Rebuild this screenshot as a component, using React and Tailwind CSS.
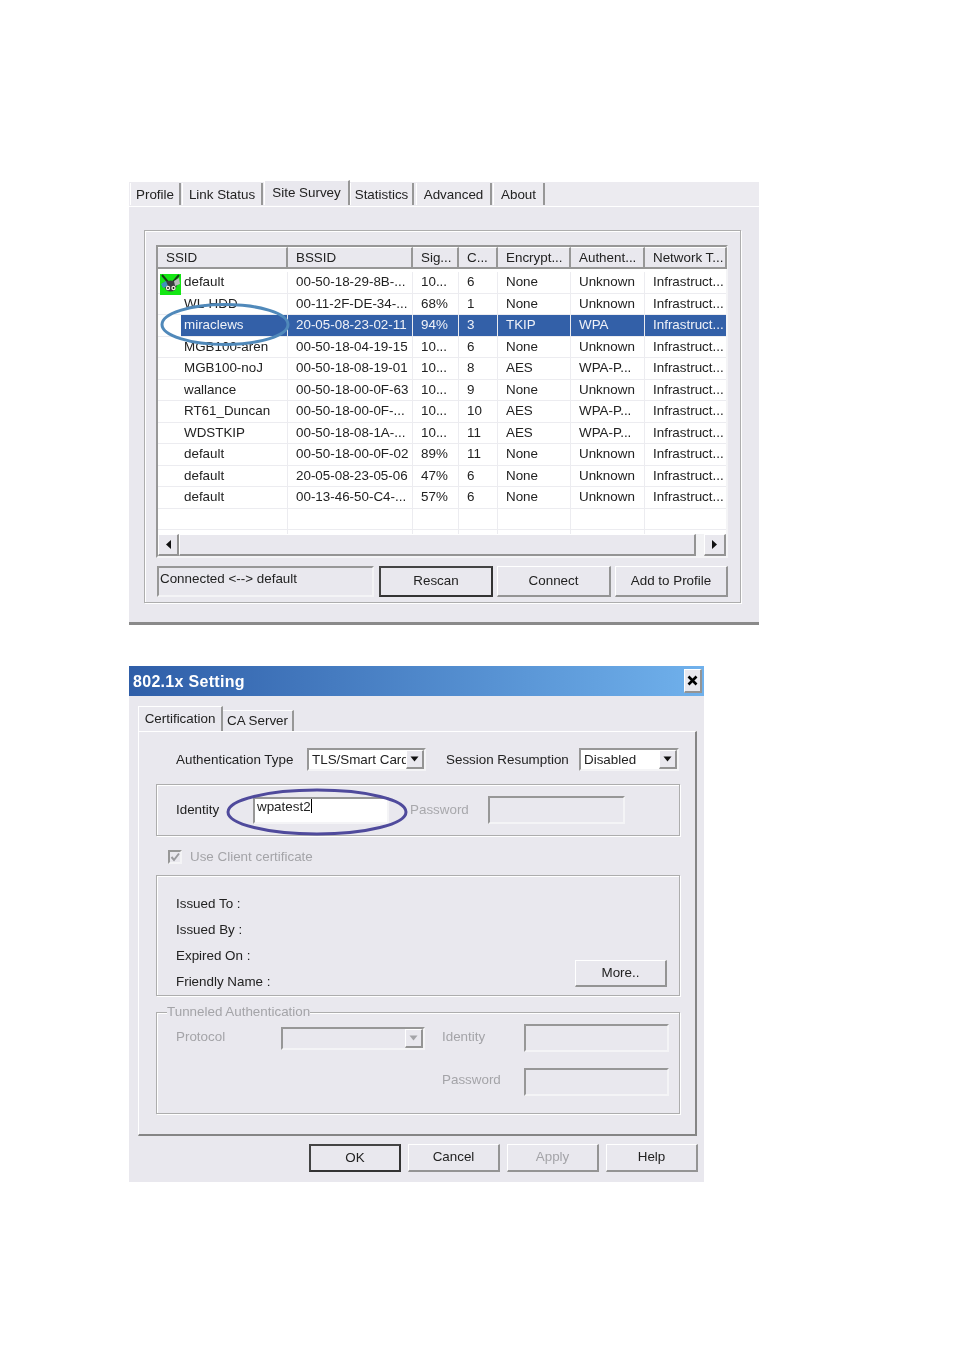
import React from "react";

const columns = [
  { title: "SSID", width: "w-[130px]", pad: "pl-[8px]", cell: "pl-[26px]" },
  { title: "BSSID", width: "w-[125px]", pad: "pl-[8px]", cell: "pl-[8px]" },
  { title: "Sig...", width: "w-[46px]", pad: "pl-[8px]", cell: "pl-[8px]" },
  { title: "C...", width: "w-[39px]", pad: "pl-[8px]", cell: "pl-[8px]" },
  { title: "Encrypt...", width: "w-[73px]", pad: "pl-[8px]", cell: "pl-[8px]" },
  { title: "Authent...", width: "w-[74px]", pad: "pl-[8px]", cell: "pl-[8px]" },
  { title: "Network T...", width: "w-[82px]", pad: "pl-[8px]", cell: "pl-[8px]" },
];

const rows = [
  ["default", "00-50-18-29-8B-...", "10...", "6", "None", "Unknown", "Infrastruct..."],
  ["WL-HDD", "00-11-2F-DE-34-...", "68%", "1", "None", "Unknown", "Infrastruct..."],
  ["miraclews", "20-05-08-23-02-11", "94%", "3", "TKIP", "WPA", "Infrastruct..."],
  ["MGB100-aren", "00-50-18-04-19-15", "10...", "6", "None", "Unknown", "Infrastruct..."],
  ["MGB100-noJ", "00-50-18-08-19-01", "10...", "8", "AES", "WPA-P...", "Infrastruct..."],
  ["wallance", "00-50-18-00-0F-63", "10...", "9", "None", "Unknown", "Infrastruct..."],
  ["RT61_Duncan", "00-50-18-00-0F-...", "10...", "10", "AES", "WPA-P...", "Infrastruct..."],
  ["WDSTKIP", "00-50-18-08-1A-...", "10...", "11", "AES", "WPA-P...", "Infrastruct..."],
  ["default", "00-50-18-00-0F-02", "89%", "11", "None", "Unknown", "Infrastruct..."],
  ["default", "20-05-08-23-05-06", "47%", "6", "None", "Unknown", "Infrastruct..."],
  ["default", "00-13-46-50-C4-...", "57%", "6", "None", "Unknown", "Infrastruct..."],
  ["", "", "", "", "", "", ""],
];

const raised = "border border-t-white border-l-white border-r-2 border-b-2 border-r-[#949494] border-b-[#949494]";
const sunken = "border-2 border-t-[#979797] border-l-[#979797] border-r-[#f4f4f6] border-b-[#f4f4f6]";
const etched = "border border-[#adadad] shadow-[inset_1px_1px_0_#fff,1px_1px_0_#fff]";

function Tab({ label, width, active }) {
  return (
    <div
      className={`flex items-center justify-center border-r-2 border-r-[#979797] border-l border-l-white ${width} ${
        active ? "h-[25px] -mt-[2px] bg-[#e9e8ee] border-t border-t-white" : "h-[22px] mt-[1px] pt-[3px]"
      }`}
    >
      {label}
    </div>
  );
}

function Btn({ label, width, height = "h-[31px]", strong, disabled }) {
  return (
    <div
      className={`flex items-center justify-center ${width} ${height} ${
        strong ? "border-2 border-[#444] border-r-[#333] border-b-[#333]" : raised
      } ${disabled ? "text-[#a4a4a8]" : ""}`}
    >
      {label}
    </div>
  );
}

function Arrow({ color = "#111" }) {
  return (
    <svg width="9" height="6" viewBox="0 0 9 6">
      <path d="M0.5 0.5 H8.5 L4.5 5.5 Z" fill={color} />
    </svg>
  );
}

function Combo({ value, width, dim }) {
  return (
    <div className={`flex ${sunken} ${width} h-[23px] ${dim ? "" : "bg-white"} overflow-hidden`}>
      <div className="flex-1 pl-[3px] leading-[20px] whitespace-nowrap overflow-hidden">{value}</div>
      <div className={`flex items-center justify-center bg-[#e9e8ee] w-[18px] ${raised}`}>
        <Arrow color={dim ? "#a4a4a8" : "#111"} />
      </div>
    </div>
  );
}

function BadgeIcon() {
  return (
    <svg width="21" height="21" viewBox="0 0 21 21" className="absolute left-[2px] top-[2px]">
      <rect width="21" height="21" fill="#14e614" />
      <path d="M2 1 L8 8 M19 1 L13 8" stroke="#173a17" strokeWidth="2" />
      <path d="M3 9 Q10.5 4 18 9 L15 16 Q10.5 19 6 16 Z" fill="#3b3f3f" />
      <path d="M1 10 L6 7 L8 12 L3 14 Z" fill="#3f93b8" />
      <path d="M14 7 L19 4 L20 10 L15 12 Z" fill="#b9bcbc" />
      <circle cx="8" cy="14" r="2.2" fill="#f4f2e4" />
      <circle cx="13.5" cy="14" r="2.2" fill="#f4f2e4" />
      <circle cx="8" cy="14" r="0.9" fill="#111" />
      <circle cx="13.5" cy="14" r="0.9" fill="#111" />
    </svg>
  );
}

function SurveyPanel() {
  return (
    <div className="relative w-[630px] h-[443px] bg-[#e9e8ee] border-b-[3px] border-b-[#8a8a8a]">
      <div className="flex h-[25px] pl-[1px] bg-[#ecebf0] border-b border-b-white">
        <Tab label="Profile" width="w-[51px]" />
        <Tab label="Link Status" width="w-[81px] ml-[1px]" />
        <Tab label="Site Survey" width="w-[86px] ml-[1px]" active />
        <Tab label="Statistics" width="w-[64px]" />
        <Tab label="Advanced" width="w-[76px] ml-[2px]" />
        <Tab label="About" width="w-[52px] ml-[1px]" />
      </div>

      <div className={`mt-[23px] ml-[15px] w-[597px] h-[373px] pt-[14px] pl-[11px] ${etched}`}>
        <div className={`w-[572px] h-[313px] ${sunken} bg-white`}>
          <div className="flex h-[22px] bg-[#e9e8ee]">
            {columns.map((col) => (
              <div
                key={col.title}
                className={`${col.width} ${col.pad} shrink-0 leading-[20px] whitespace-nowrap overflow-hidden border-r-2 border-r-[#979797] border-b-2 border-b-[#979797] border-t border-t-white`}
              >
                {col.title}
              </div>
            ))}
          </div>
          <div className="relative h-[265px] pt-[3px] overflow-hidden">
            {rows.map((row, i) => (
              <div key={i} className="relative flex h-[21.5px] border-b border-b-[#ececf0]">
                {i === 0 && <BadgeIcon />}
                {row.map((text, j) => (
                  <div
                    key={j}
                    className={`${columns[j].width} ${columns[j].cell} shrink-0 leading-[20px] whitespace-nowrap overflow-hidden border-r border-r-[#ececf0] ${
                      i === 2 ? "text-[#f0f2f8]" : ""
                    } ${i === 2 && j > 0 ? "bg-[#3360a8]" : ""}`}
                  >
                    {i === 2 && j === 0 ? (
                      <div className="-ml-[3px] pl-[3px] bg-[#3360a8] h-full">{text}</div>
                    ) : (
                      text
                    )}
                  </div>
                ))}
              </div>
            ))}
            <div className="flex h-[10px]">
              {columns.map((col) => (
                <div key={col.title} className={`${col.width} shrink-0 border-r border-r-[#ececf0]`} />
              ))}
            </div>
          </div>
          <div className="flex h-[22px] bg-[#e9e8ee]">
            <div className={`w-[21px] flex items-center justify-center ${raised}`}>
              <svg width="5" height="9" viewBox="0 0 5 9">
                <path d="M5 0 V9 L0 4.5 Z" fill="#111" />
              </svg>
            </div>
            <div className={`w-[517px] ${raised}`} />
            <div className="w-[8px] bg-[#f2f2f4]" />
            <div className={`w-[22px] flex items-center justify-center ${raised}`}>
              <svg width="5" height="9" viewBox="0 0 5 9">
                <path d="M0 0 V9 L5 4.5 Z" fill="#111" />
              </svg>
            </div>
          </div>
        </div>

        <div className="flex mt-[8px]">
          <div className={`w-[217px] h-[31px] ml-[1px] pl-[1px] leading-[22px] ${sunken}`}>Connected &lt;--&gt; default</div>
          <Btn label="Rescan" width="w-[114px] ml-[5px]" strong />
          <Btn label="Connect" width="w-[114px] ml-[4px]" />
          <Btn label="Add to Profile" width="w-[113px] ml-[4px]" />
        </div>
      </div>

      <svg width="135" height="48" viewBox="0 0 135 48" className="absolute left-[30px] top-[120px]">
        <ellipse cx="66" cy="22.5" rx="63" ry="20" fill="none" stroke="#5089ba" strokeWidth="3" />
      </svg>
    </div>
  );
}

function CertificationPage() {
  return (
    <div className="w-[559px] h-[405px] border-t border-l border-t-white border-l-white border-r-2 border-b-2 border-r-[#858585] border-b-[#858585] pl-[17px]">
      <div className="flex items-center h-[23px] mt-[16px]">
        <div className="w-[132px] pl-[20px] pt-[2px] whitespace-nowrap">Authentication Type</div>
        <Combo value="TLS/Smart Card" width="w-[119px] ml-[19px]" />
        <div className="ml-[20px] w-[133px] pt-[2px] whitespace-nowrap">Session Resumption</div>
        <Combo value="Disabled" width="w-[100px]" />
      </div>

      <div className={`flex items-center w-[524px] h-[52px] mt-[13px] pl-[19px] ${etched}`}>
        <div className="w-[77px]">Identity</div>
        <div className={`w-[136px] h-[27px] ${sunken} bg-white leading-[16px] pl-[2px] whitespace-nowrap`}>
          wpatest2<span className="inline-block w-[1px] h-[14px] bg-black align-[-2px]" />
        </div>
        <div className="w-[78px] ml-[21px] text-[#a8a8ac]">Password</div>
        <div className={`w-[137px] h-[28px] ${sunken}`} />
      </div>

      <div className="flex items-center h-[14px] mt-[14px] ml-[12px] text-[#a4a4a8]">
        <div className={`flex items-center justify-center w-[14px] h-[14px] ${sunken}`}>
          <svg width="10" height="10" viewBox="0 0 10 10">
            <path d="M1.5 5 L4 8 L9 1.5" fill="none" stroke="#9a9a9e" strokeWidth="2" />
          </svg>
        </div>
        <span className="ml-[8px]">Use Client certificate</span>
      </div>

      <div className={`relative w-[524px] h-[121px] mt-[11px] pl-[19px] pt-[15px] ${etched}`}>
        {["Issued To :", "Issued By :", "Expired On :", "Friendly Name :"].map((label) => (
          <div key={label} className="h-[26px] leading-[26px]">
            {label}
          </div>
        ))}
        <Btn label="More.." width="w-[92px] absolute left-[418px] top-[84px]" height="h-[27px]" />
      </div>

      <div className={`relative w-[524px] h-[102px] mt-[16px] text-[#a4a4a8] pl-[19px] ${etched}`}>
        <div className="absolute left-[10px] -top-[9px] bg-[#e9e8ee] leading-[16px] whitespace-nowrap">Tunneled Authentication</div>
        <div className="flex items-center h-[28px] mt-[11px]">
          <div className="w-[105px] -mt-[2px]">Protocol</div>
          <Combo value="" width="w-[144px]" dim />
          <div className="w-[82px] ml-[17px] -mt-[2px]">Identity</div>
          <div className={`w-[145px] h-[28px] ${sunken}`} />
        </div>
        <div className="flex items-center justify-end h-[28px] mt-[16px] pr-[10px]">
          <div className="w-[82px] -mt-[3px]">Password</div>
          <div className={`w-[145px] h-[28px] ${sunken}`} />
        </div>
      </div>
    </div>
  );
}

function SettingDialog() {
  return (
    <div className="relative w-[575px] h-[516px] mt-[41px] bg-[#e9e8ee]">
      <div className="flex items-center justify-between h-[30px] bg-gradient-to-r from-[#2f5ea8] to-[#70b1ec] pl-[4px] pr-[2px]">
        <span className="text-white font-bold text-[16px] tracking-[0.3px] pt-[2px]">802.1x Setting</span>
        <div className={`flex items-center justify-center w-[18px] h-[24px] bg-[#e9e8ee] ${raised}`}>
          <svg width="11" height="11" viewBox="0 0 11 11">
            <path d="M1.5 1.5 L9.5 9.5 M9.5 1.5 L1.5 9.5" stroke="#000" strokeWidth="2.6" />
          </svg>
        </div>
      </div>

      <div className="relative ml-[9px] mt-[12px]">
        <div className="flex h-[23px] items-end">
          <div className="flex items-center justify-center w-[85px] h-[25px] relative z-10 bg-[#e9e8ee] border-t border-l border-t-white border-l-white border-r-2 border-r-[#979797]">
            Certification
          </div>
          <div className="flex items-center justify-center w-[71px] h-[21px] pt-[1px] border-t border-t-white border-r-2 border-r-[#979797]">
            CA Server
          </div>
        </div>
        <CertificationPage />
      </div>

      <div className="flex justify-start mt-[8px] ml-[180px] gap-[7px]">
        <Btn label="OK" width="w-[92px]" height="h-[28px]" strong />
        <Btn label="Cancel" width="w-[92px]" height="h-[28px]" />
        <Btn label="Apply" width="w-[92px]" height="h-[28px]" disabled />
        <Btn label="Help" width="w-[92px]" height="h-[28px]" />
      </div>

      <svg width="184" height="50" viewBox="0 0 184 50" className="absolute left-[97px] top-[122px]">
        <ellipse cx="91" cy="24" rx="89" ry="22" fill="none" stroke="#4f4a9c" strokeWidth="3" />
      </svg>
    </div>
  );
}

export default function App() {
  return (
    <div className="w-[954px] h-[1350px] bg-white pt-[182px] pl-[129px] text-[13.4px] text-[#222] font-['Liberation_Sans',Arial,sans-serif] overflow-hidden blur-[0.35px]">
      <SurveyPanel />
      <SettingDialog />
    </div>
  );
}
